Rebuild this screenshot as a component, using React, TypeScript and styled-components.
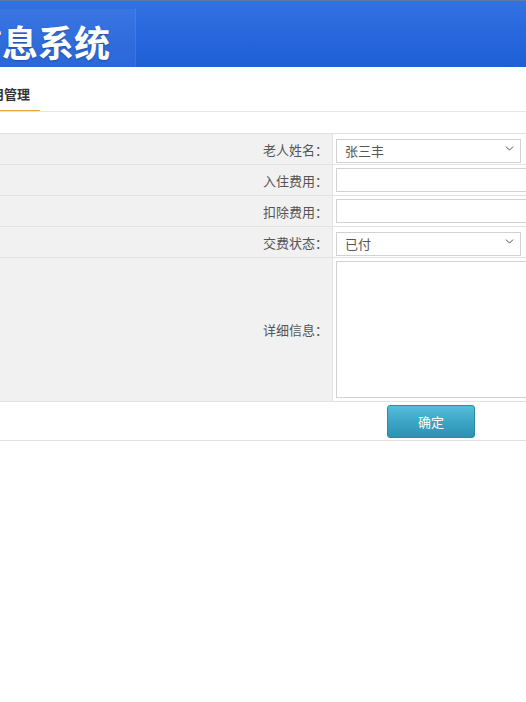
import React from "react";
import styled, { createGlobalStyle } from "styled-components";
import { ChevronDown } from "lucide-react";

const GlobalStyle = createGlobalStyle`
  html, body {
    margin: 0;
    padding: 0;
    background: #fff;
    overflow: hidden;
  }
  body {
    font-family: "Noto Sans CJK SC", "Noto Sans", sans-serif;
  }
`;

interface FieldRow {
  label: string;
  kind: "select" | "input";
  value?: string;
}

const rows: FieldRow[] = [
  { label: "老人姓名：", kind: "select", value: "张三丰" },
  { label: "入住费用：", kind: "input" },
  { label: "扣除费用：", kind: "input" },
  { label: "交费状态：", kind: "select", value: "已付" },
];

export default function App() {
  return (
    <>
      <GlobalStyle />
      <Page>
        <Header>
          <LogoBox>
            <Title>养老院信息系统</Title>
          </LogoBox>
        </Header>
        <TabBar>
          <Tab>费用管理</Tab>
        </TabBar>
        <Form>
          {rows.map((row) => (
            <React.Fragment key={row.label}>
              <Label>{row.label}</Label>
              <Field>
                {row.kind === "select" ? (
                  <SelectWrap>
                    <Select defaultValue={row.value}>
                      <option>{row.value}</option>
                    </Select>
                    <Arrow>
                      <ChevronDown size={13} strokeWidth={1.75} />
                    </Arrow>
                  </SelectWrap>
                ) : (
                  <Input type="text" />
                )}
              </Field>
            </React.Fragment>
          ))}
          <Label>详细信息：</Label>
          <Field>
            <TextArea />
          </Field>
          <ButtonRow>
            <SubmitButton type="button">确定</SubmitButton>
          </ButtonRow>
        </Form>
      </Page>
    </>
  );
}

const Page = styled.div`
  width: 526px;
  overflow: hidden;
`;

const Header = styled.div`
  height: 66px;
  border-top: 1px solid #5d7aa6;
  background: linear-gradient(180deg, #3272e2 0%, #2766dc 55%, #1f5fd6 100%);
  display: flex;
  align-items: flex-end;
`;

const LogoBox = styled.div`
  width: 135px;
  height: 58px;
  background: rgba(255, 255, 255, 0.05);
  border-right: 1px solid rgba(255, 255, 255, 0.08);
  overflow: hidden;
  display: flex;
  align-items: center;
`;

const Title = styled.h1`
  margin: 0 0 0 -142px;
  white-space: nowrap;
  font-size: 36px;
  font-weight: 700;
  line-height: 40px;
  padding-top: 5px;
  color: #fff;
  text-shadow: 0 1px 2px rgba(0, 0, 0, 0.25);
`;

const TabBar = styled.div`
  height: 44px;
  border-bottom: 1px solid #e6e6e6;
  display: flex;
  align-items: flex-end;
  overflow: hidden;
`;

const Tab = styled.div`
  margin-left: -22px;
  margin-bottom: -1px;
  padding: 0 10px 6px 0;
  height: 37px;
  line-height: 20px;
  display: flex;
  align-items: flex-end;
  box-sizing: border-box;
  font-size: 13px;
  font-weight: 700;
  color: #333;
  border-bottom: 2px solid #e6a746;
  white-space: nowrap;
`;

const Form = styled.div`
  margin-top: 21px;
  width: 760px;
  display: grid;
  grid-template-columns: 333px 1fr;
  border-top: 1px solid #e2e2e2;
  border-bottom: 1px solid #e2e2e2;
`;

const Label = styled.div`
  background: #f1f1f1;
  border-bottom: 1px solid #e2e2e2;
  border-right: 1px solid #e2e2e2;
  display: flex;
  align-items: center;
  justify-content: flex-end;
  padding-right: 4px;
  font-size: 13px;
  color: #555;
`;

const Field = styled.div`
  padding: 3px;
  border-bottom: 1px solid #e2e2e2;
  display: flex;
  align-items: center;
`;

const SelectWrap = styled.div`
  position: relative;
  width: 185px;
  height: 24px;
`;

const Select = styled.select`
  appearance: none;
  width: 100%;
  height: 100%;
  box-sizing: border-box;
  border: 1px solid #d2d2d2;
  border-radius: 0;
  background: #fff;
  padding: 0 0 0 8px;
  font-family: "Noto Sans CJK SC", "Noto Sans", sans-serif;
  font-size: 13px;
  color: #555;
  outline: none;
`;

const Arrow = styled.span`
  position: absolute;
  right: 5px;
  top: 5px;
  color: #444;
  pointer-events: none;
  display: flex;
`;

const Input = styled.input`
  width: 300px;
  height: 24px;
  box-sizing: border-box;
  border: 1px solid #d2d2d2;
  padding: 0 8px;
  font-size: 13px;
  outline: none;
`;

const TextArea = styled.textarea`
  width: 300px;
  height: 137px;
  box-sizing: border-box;
  border: 1px solid #d2d2d2;
  resize: none;
  outline: none;
  font-family: "Noto Sans CJK SC", "Noto Sans", sans-serif;
`;

const ButtonRow = styled.div`
  grid-column: 1 / -1;
  padding: 3px 0 2px 387px;
  background: #fff;
`;

const SubmitButton = styled.button`
  width: 88px;
  height: 33px;
  border: 1px solid #2a88a8;
  border-radius: 3px;
  background: linear-gradient(180deg, #56bedb 0%, #3aa3c4 55%, #2e91b2 100%);
  color: #fff;
  font-family: "Noto Sans CJK SC", "Noto Sans", sans-serif;
  font-size: 13px;
  cursor: pointer;
`;
